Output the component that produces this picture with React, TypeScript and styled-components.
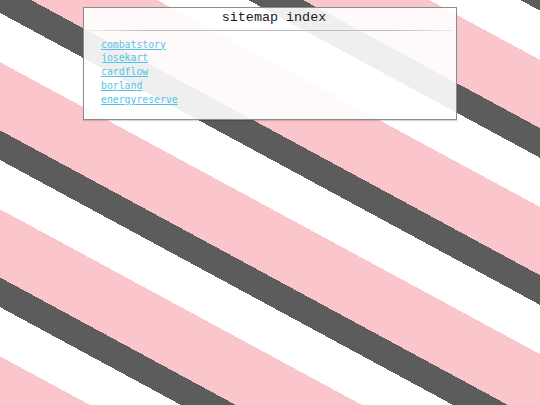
import React from "react";
import styled, { createGlobalStyle } from "styled-components";

const GlobalStyle = createGlobalStyle`
  html, body {
    margin: 0;
    padding: 0;
  }
  body {
    font-family: "DejaVu Sans Mono", "Liberation Mono", monospace;
  }
`;

const Page = styled.div`
  box-sizing: border-box;
  width: 100%;
  height: 100vh;
  padding-top: 7px;
  background: repeating-linear-gradient(
    28.4deg,
    #ffffff 42.8px,
    #ffffff 86.1px,
    #5c5c5c 86.1px,
    #5c5c5c 112.2px,
    #fac6cc 112.2px,
    #fac6cc 172.2px
  );
`;

const Panel = styled.section`
  box-sizing: border-box;
  width: 374px;
  margin: 0 auto;
  border: 1px solid #8c8c8c;
  background: rgba(255, 255, 255, 0.9);
  box-shadow: 0 1px 1px rgba(0, 0, 0, 0.15);
  padding-bottom: 12px;
`;

const Title = styled.h1`
  margin: 0;
  padding: 1px 0 3px 8px;
  font-family: "Liberation Mono", "DejaVu Sans Mono", monospace;
  font-weight: normal;
  font-size: 13.4px;
  line-height: 18px;
  color: #1a1a1a;
  text-align: center;
`;

const Divider = styled.div`
  height: 1px;
  margin: 0 3px;
  background: linear-gradient(
    to right,
    rgba(190, 190, 190, 0.2),
    rgba(190, 190, 190, 1) 15%,
    rgba(190, 190, 190, 1) 85%,
    rgba(190, 190, 190, 0.2)
  );
`;

const LinkList = styled.ul`
  list-style: none;
  margin: 0;
  padding: 6.6px 0 0 17px;
`;

const Item = styled.li`
  font-size: 9.8px;
  line-height: 13.8px;
`;

const SiteLink = styled.a`
  font-family: "DejaVu Sans Mono", "Liberation Mono", monospace;
  color: #52c3e6;
  text-decoration: underline;
  text-decoration-color: #52c3e6;
`;

const sites = ["combatstory", "josekart", "cardflow", "borland", "energyreserve"];

export default function App() {
  return (
    <>
      <GlobalStyle />
      <Page>
        <Panel>
          <Title>sitemap index</Title>
          <Divider />
          <LinkList>
            {sites.map((s) => (
              <Item key={s}>
                <SiteLink href={`#${s}`}>{s}</SiteLink>
              </Item>
            ))}
          </LinkList>
        </Panel>
      </Page>
    </>
  );
}
